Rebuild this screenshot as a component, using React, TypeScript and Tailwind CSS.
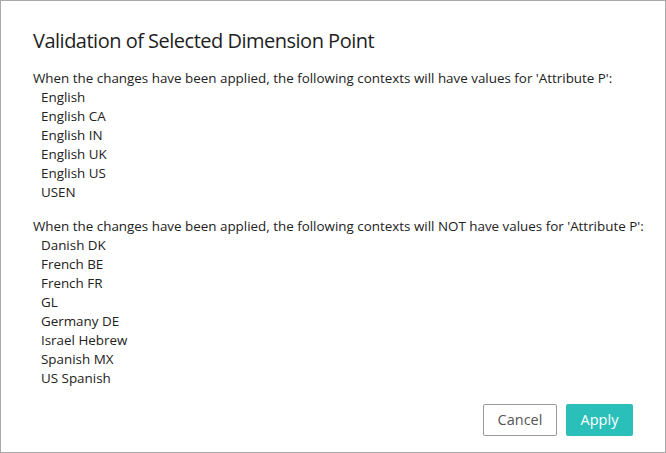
const withValues = ['English', 'English CA', 'English IN', 'English UK', 'English US', 'USEN'];
const withoutValues = [
  'Danish DK',
  'French BE',
  'French FR',
  'GL',
  'Germany DE',
  'Israel Hebrew',
  'Spanish MX',
  'US Spanish',
];

function ContextList({ intro, items }: { intro: string; items: string[] }) {
  return (
    <div className="flex flex-col">
      <p className="leading-[19px] whitespace-nowrap">{intro}</p>
      <ul className="flex flex-col pl-2">
        {items.map((item) => (
          <li key={item} className="leading-[19px]">
            {item}
          </li>
        ))}
      </ul>
    </div>
  );
}

export default function App() {
  return (
    <div className="w-[666px] h-[453px] bg-white border border-[#a9a9a9] flex flex-col font-['Open_Sans',sans-serif] text-[#222222]">
      <div className="flex-1 flex flex-col pl-8 pr-4 pt-[27px]">
        <h2 className="text-[20px] leading-[26px] text-[#1e1e1e] tracking-[-0.5px]">
          Validation of Selected Dimension Point
        </h2>
        <div className="mt-[15px] flex flex-col gap-[15px] text-[13.4px]">
          <ContextList
            intro="When the changes have been applied, the following contexts will have values for 'Attribute P':"
            items={withValues}
          />
          <ContextList
            intro="When the changes have been applied, the following contexts will NOT have values for 'Attribute P':"
            items={withoutValues}
          />
        </div>
      </div>
      <div className="flex justify-end gap-[9px] pr-[32px] pb-[16px]">
        <button className="w-[74px] h-[32px] border border-[#9a9a9a] rounded-[2px] bg-white text-[14.5px] text-[#555555]">
          Cancel
        </button>
        <button className="w-[67px] h-[32px] rounded-[2px] bg-[#2bbfba] text-[14.5px] text-white">
          Apply
        </button>
      </div>
    </div>
  );
}
